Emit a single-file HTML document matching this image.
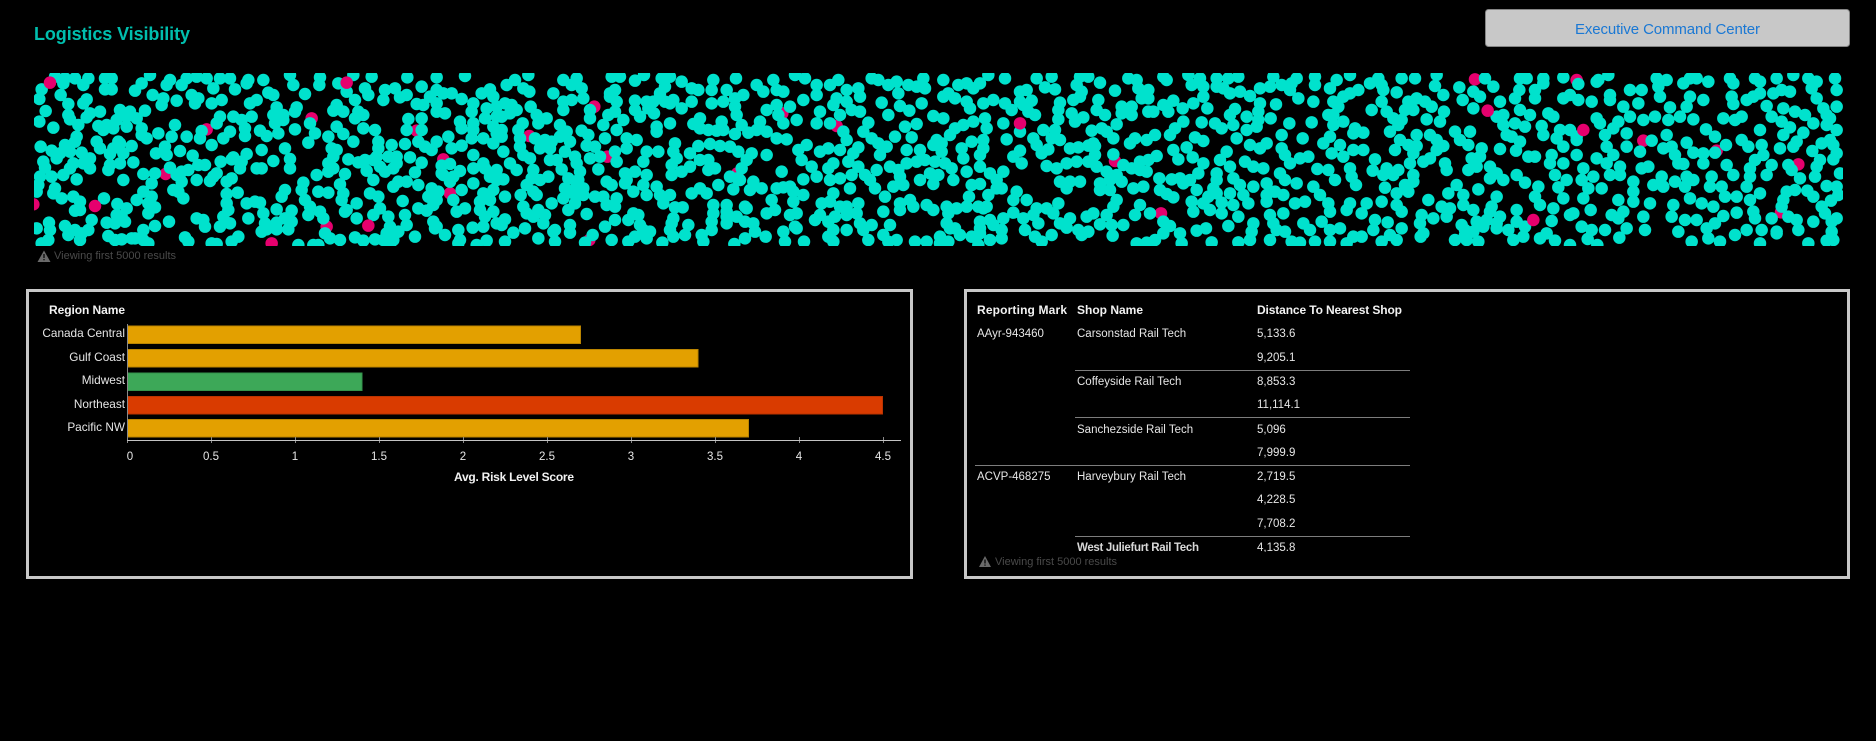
<!DOCTYPE html>
<html><head><meta charset="utf-8"><title>Logistics Visibility</title>
<style>
html,body{margin:0;padding:0;background:#000;width:1876px;height:741px;overflow:hidden}
svg{display:block}
text{font-family:"Liberation Sans",sans-serif;font-size:11.5px;fill:#e6e6e6}
.l{font-size:11.8px}
.b{font-weight:bold;fill:#f2f2f2;font-size:12px}
.w{fill:#4a4a4a;font-size:11px}
.e{text-anchor:end}.m{text-anchor:middle}
.t{fill:none;stroke-linecap:round;stroke-width:37.5}
</style></head><body>
<svg width="1876" height="741" viewBox="0 0 1876 741" xmlns="http://www.w3.org/2000/svg">
<defs><clipPath id="c"><rect x="34" y="73" width="1809" height="173"/></clipPath></defs>
<text x="34" y="40" textLength="156" style="font-size:18px;font-weight:bold;fill:#00bfae">Logistics Visibility</text>
<rect x="1485.5" y="9.5" width="364" height="37" rx="3" fill="#c8c8c8" stroke="#858585"/>
<text x="1575" y="34" textLength="185" style="font-size:15px;fill:#1a78d4">Executive Command Center</text>
<g clip-path="url(#c)">
<g transform="scale(.33333)" class="t" stroke="#e6006e"><path d="M935 355h0M620 388h0M1250 392h0M1330 478h0M497 522h0M1350 580h0M980 680h0"/></g>
<g transform="translate(500 60) scale(.33333)" class="t" stroke="#e6006e"><path d="M283 140h0M847 160h0M1010 198h0M88 228h0M322 290h0M712 340h0M268 540h0"/></g>
<g transform="translate(1000 60) scale(.33333)" class="t" stroke="#e6006e"><path d="M345 303h0M483 460h0M1425 58h0"/></g>
<g transform="translate(1400 0) scale(.33333)" class="t" stroke="#e6006e"><path d="M530 240h0M730 422h0M950 452h0M1195 493h0M1143 637h0"/></g>
<g transform="scale(.33333)" class="t" stroke="#00e2cd"><path d="M165 230h0M195 235h0M225 235h0M265 235h0M315 235h0M335 235h0M450 225h0M510 240h0M560 235h0M590 230h0M620 235h0M660 235h0M690 235h0M745 240h0M790 240h0M870 225h0M960 232h0M1060 225h0M1115 230h0M1222 232h0M1310 232h0M1395 228h0M125 268h0M190 250h0M250 255h0M315 268h0M335 268h0M405 272h0M425 250h0M500 255h0M545 255h0M575 285h0M640 265h0M705 268h0M740 250h0M880 255h0M958 255h0M1015 250h0M1040 275h0M1095 265h0M1155 270h0M1185 265h0M1265 260h0M1310 270h0M1355 280h0M1470 268h0M118 297h0M182 285h0M260 298h0M458 285h0M490 295h0M530 302h0M595 295h0M635 310h0M665 300h0M770 300h0M805 278h0M820 285h0M915 282h0M1065 300h0M1105 285h0M1150 300h0M1200 292h0M1220 285h0M1290 290h0M1330 280h0M1385 297h0M1445 280h0M1480 290h0M137 333h0M205 312h0M250 310h0M485 315h0M585 310h0M750 310h0M830 322h0M890 322h0M1010 315h0M1250 312h0M1270 315h0M1310 310h0M1420 310h0M360 330h0M390 335h0M435 332h0M270 340h0M300 335h0M205 345h0M1000 332h0M1030 335h0M1075 335h0M1310 335h0M1335 340h0M1415 335h0M1460 325h0M1490 320h0M118 365h0M210 358h0M260 352h0M235 375h0M350 360h0M320 375h0M380 350h0M410 355h0M525 375h0M660 350h0M700 350h0M725 360h0M755 350h0M820 345h0M850 345h0M885 335h0M1065 355h0M1090 345h0M1225 357h0M1265 355h0M1380 365h0M1420 370h0M1455 355h0M1490 350h0M160 383h0M295 378h0M380 380h0M425 385h0M650 370h0M690 395h0M735 385h0M780 392h0M825 370h0M850 360h0M885 388h0M930 370h0M1010 380h0M1090 385h0M1125 390h0M1220 390h0M1265 390h0M1385 385h0M1420 390h0M1480 380h0M310 390h0M340 385h0M475 400h0M515 410h0M605 393h0M800 408h0M835 400h0M945 400h0M1030 402h0M1345 410h0M1415 415h0M1450 415h0M1490 400h0M230 410h0M225 425h0M290 425h0M355 425h0M425 405h0M440 415h0M560 410h0M600 415h0M670 415h0M735 408h0M985 410h0M1060 425h0M1135 425h0M1175 435h0M1215 432h0M1255 425h0M1310 425h0M1385 437h0M1480 430h0M122 440h0M195 435h0M155 452h0M300 445h0M340 445h0M395 438h0M360 430h0M495 440h0M540 453h0M635 435h0M785 450h0M855 445h0M925 428h0M995 445h0M1010 450h0M1135 445h0M1275 440h0M1295 450h0M1355 445h0M180 460h0M210 455h0M245 458h0M330 462h0M370 460h0M468 460h0M500 465h0M578 467h0M700 472h0M740 462h0M870 477h0M1000 470h0M1045 478h0M1095 480h0M1130 470h0M1165 470h0M1190 470h0M1230 472h0M1420 465h0M130 485h0M170 475h0M270 475h0M220 490h0M250 490h0M360 490h0M400 487h0M595 495h0M615 495h0M662 485h0M695 478h0M725 485h0M820 483h0M985 490h0M1075 487h0M1120 480h0M1190 490h0M1265 488h0M1325 497h0M1350 492h0M1450 490h0M1420 505h0M135 503h0M210 505h0M270 505h0M325 510h0M330 495h0M510 503h0M565 510h0M720 505h0M770 505h0M785 505h0M870 505h0M1000 505h0M1100 512h0M1140 500h0M1180 505h0M1245 517h0M1380 513h0M1325 520h0M1455 505h0M1490 510h0M120 530h0M155 530h0M190 525h0M430 522h0M465 520h0M530 525h0M545 515h0M650 520h0M640 530h0M695 535h0M950 525h0M985 515h0M1035 522h0M1155 515h0M1330 525h0M1360 530h0M1470 530h0M115 555h0M230 538h0M165 565h0M370 540h0M590 540h0M630 543h0M680 545h0M545 545h0M455 550h0M910 548h0M1020 553h0M1120 540h0M1195 545h0M1220 545h0M1420 550h0M1350 545h0M1490 540h0M110 575h0M160 580h0M220 590h0M185 595h0M520 570h0M535 575h0M430 575h0M680 582h0M713 578h0M855 570h0M845 590h0M905 570h0M955 575h0M985 578h0M1030 580h0M1110 580h0M1135 590h0M1180 560h0M1255 555h0M1295 565h0M1315 575h0M1385 570h0M1450 580h0M1480 570h0M240 605h0M312 595h0M410 600h0M455 590h0M550 595h0M680 610h0M740 610h0M765 605h0M780 608h0M915 600h0M1025 600h0M1208 603h0M1285 590h0M1310 600h0M1360 600h0M1440 605h0M1470 600h0M240 630h0M225 632h0M352 612h0M380 625h0M445 610h0M465 622h0M685 630h0M830 628h0M875 632h0M930 620h0M960 635h0M1040 630h0M1070 610h0M1140 625h0M1255 625h0M1280 632h0M1300 615h0M1395 625h0M1370 635h0M1440 630h0M1480 635h0M365 650h0M350 645h0M445 640h0M590 655h0M610 660h0M670 650h0M745 655h0M790 640h0M855 655h0M925 645h0M970 655h0M1035 635h0M1070 655h0M1120 645h0M1165 650h0M1215 645h0M1455 650h0M147 668h0M275 660h0M195 678h0M320 668h0M345 670h0M375 665h0M465 678h0M507 665h0M615 680h0M660 680h0M690 670h0M795 670h0M830 668h0M875 665h0M1170 680h0M1220 675h0M1300 665h0M1310 680h0M1375 690h0M1418 683h0M1450 680h0M1490 670h0M110 685h0M150 690h0M225 690h0M265 690h0M205 705h0M245 700h0M430 690h0M405 715h0M800 688h0M830 688h0M865 688h0M785 695h0M975 700h0M1065 712h0M1195 695h0M1160 700h0M1245 710h0M1335 705h0M1380 720h0M1305 685h0M145 720h0M125 730h0M240 720h0M325 708h0M345 720h0M365 718h0M395 715h0M430 720h0M445 730h0M555 712h0M565 725h0M635 730h0M650 732h0M715 710h0M695 725h0M895 735h0M940 735h0M955 735h0M990 715h0M1020 720h0M1090 722h0M1125 718h0M1150 720h0M1180 720h0M1170 735h0M1375 730h0M1430 735h0M1460 722h0"/></g>
<g transform="translate(500 60) scale(.33333)" class="t" stroke="#00e2cd"><path d="M835 165h0M712 355h0M20 75h0M45 60h0M85 45h0M190 60h0M230 55h0M335 50h0M360 50h0M405 62h0M432 45h0M485 55h0M510 50h0M545 65h0M640 60h0M708 55h0M770 75h0M820 60h0M885 45h0M915 55h0M1015 60h0M1115 55h0M1135 60h0M1190 65h0M1270 55h0M1330 60h0M1400 70h0M1375 75h0M1465 45h0M70 85h0M88 95h0M160 100h0M215 75h0M245 85h0M330 100h0M345 90h0M495 80h0M480 100h0M575 85h0M595 90h0M635 90h0M680 90h0M730 105h0M790 95h0M830 90h0M850 95h0M950 75h0M990 75h0M1040 90h0M1075 85h0M1165 75h0M1225 75h0M1250 80h0M1275 85h0M1195 100h0M1345 100h0M1420 85h0M1440 70h0M15 130h0M35 135h0M190 125h0M215 120h0M250 115h0M330 110h0M350 125h0M405 122h0M440 125h0M460 125h0M495 125h0M520 120h0M575 125h0M635 130h0M670 125h0M705 115h0M830 135h0M910 120h0M950 105h0M1010 115h0M1080 110h0M1145 128h0M1265 130h0M1330 110h0M1365 115h0M1400 125h0M1480 120h0M50 150h0M92 140h0M190 150h0M270 150h0M345 155h0M405 150h0M445 145h0M462 160h0M510 130h0M545 145h0M705 140h0M800 150h0M870 140h0M1000 135h0M1040 125h0M1080 155h0M1165 165h0M1200 138h0M1228 152h0M1300 168h0M1330 175h0M1410 145h0M1450 130h0M30 160h0M5 170h0M110 165h0M140 175h0M325 165h0M270 175h0M420 170h0M710 165h0M600 175h0M780 185h0M890 180h0M960 155h0M1020 165h0M1055 150h0M68 190h0M115 190h0M180 195h0M310 195h0M370 180h0M510 190h0M470 200h0M580 192h0M665 185h0M725 195h0M850 190h0M950 190h0M990 190h0M1105 188h0M1215 200h0M1250 192h0M1365 205h0M1420 185h0M1455 175h0M1390 195h0M55 210h0M5 210h0M200 215h0M245 212h0M350 210h0M470 215h0M600 205h0M625 210h0M650 212h0M670 210h0M705 222h0M745 218h0M770 210h0M800 215h0M1030 215h0M1090 215h0M1350 225h0M1460 205h0M5 230h0M60 235h0M105 235h0M135 240h0M155 245h0M180 230h0M210 245h0M265 225h0M315 235h0M380 235h0M410 240h0M830 235h0M860 238h0M1040 240h0M1115 235h0M1185 230h0M1235 232h0M1310 240h0M1415 245h0M1450 240h0M60 260h0M120 265h0M150 265h0M260 257h0M285 260h0M380 265h0M525 250h0M595 258h0M630 252h0M660 258h0M690 260h0M920 255h0M985 265h0M1075 262h0M1135 250h0M1160 260h0M1300 255h0M1325 250h0M1385 265h0M1450 265h0M10 275h0M70 285h0M90 295h0M195 275h0M225 290h0M270 295h0M300 290h0M345 275h0M440 275h0M475 275h0M520 275h0M570 280h0M715 275h0M755 280h0M800 285h0M895 270h0M960 275h0M1020 270h0M1060 280h0M1140 285h0M1220 270h0M1260 270h0M1325 275h0M1390 295h0M1440 285h0M170 300h0M150 300h0M230 310h0M30 310h0M350 305h0M430 305h0M530 295h0M600 300h0M625 300h0M740 300h0M905 300h0M1000 310h0M1045 305h0M1075 320h0M1220 310h0M1250 305h0M1275 300h0M1305 305h0M1335 310h0M1440 320h0M50 330h0M100 330h0M185 328h0M295 328h0M240 335h0M515 315h0M570 320h0M645 325h0M725 325h0M845 335h0M935 320h0M985 325h0M1170 320h0M1130 330h0M1195 330h0M1290 340h0M1355 325h0M1400 335h0M95 355h0M145 350h0M205 355h0M235 360h0M375 340h0M380 360h0M405 335h0M440 345h0M515 345h0M545 335h0M625 330h0M690 350h0M720 360h0M910 358h0M950 350h0M990 360h0M1020 355h0M1055 345h0M1095 345h0M1200 350h0M1315 345h0M1360 360h0M1470 340h0M10 358h0M80 375h0M120 360h0M320 365h0M335 375h0M870 380h0M760 365h0M1110 360h0M1490 360h0M100 395h0M195 385h0M230 375h0M250 385h0M375 370h0M430 375h0M470 380h0M600 385h0M655 375h0M700 388h0M750 390h0M785 385h0M830 385h0M850 382h0M1050 385h0M1180 380h0M1210 375h0M1260 360h0M1125 385h0M1300 372h0M1415 375h0M1440 372h0M1490 385h0M15 410h0M62 405h0M110 405h0M190 415h0M220 400h0M250 405h0M285 410h0M310 410h0M350 415h0M400 395h0M440 405h0M480 405h0M510 405h0M575 400h0M620 400h0M880 395h0M910 405h0M1000 400h0M1155 410h0M1407 410h0M1465 405h0M155 430h0M225 430h0M320 435h0M345 440h0M490 430h0M640 435h0M680 435h0M735 440h0M815 420h0M880 425h0M965 430h0M990 425h0M1020 440h0M1075 430h0M1040 440h0M1200 430h0M1230 420h0M1280 435h0M1340 440h0M1370 445h0M1400 440h0M1435 440h0M1460 440h0M70 440h0M115 450h0M205 450h0M525 442h0M548 442h0M640 460h0M680 455h0M740 445h0M800 460h0M825 450h0M1150 455h0M1200 450h0M1240 440h0M1300 450h0M1450 445h0M80 460h0M100 470h0M135 465h0M260 462h0M400 460h0M415 465h0M520 475h0M635 485h0M680 470h0M710 470h0M870 465h0M890 460h0M960 465h0M1040 465h0M1070 460h0M1345 460h0M1440 485h0M1470 480h0M15 478h0M130 490h0M345 480h0M385 480h0M420 495h0M515 490h0M635 510h0M680 490h0M735 485h0M760 490h0M885 500h0M945 480h0M985 485h0M1005 470h0M1080 490h0M1115 495h0M1170 495h0M1340 490h0M1365 505h0M1480 495h0M5 495h0M40 518h0M75 505h0M210 495h0M165 510h0M315 500h0M430 510h0M450 515h0M510 510h0M565 495h0M555 525h0M605 525h0M765 515h0M850 515h0M890 505h0M1000 510h0M1040 510h0M1090 510h0M1150 525h0M1415 530h0M1440 520h0M1380 525h0M1320 530h0M1350 505h0M1440 505h0M15 545h0M115 535h0M160 515h0M165 545h0M210 518h0M278 525h0M255 548h0M335 540h0M385 545h0M405 530h0M440 535h0M487 548h0M520 530h0M610 545h0M703 552h0M735 535h0M797 530h0M855 545h0M912 545h0M985 530h0M1000 545h0M1105 540h0M1165 545h0M1190 540h0M1245 545h0M1280 545h0M1320 550h0M1345 545h0M1435 555h0M1470 540h0"/></g>
<g transform="translate(1000 60) scale(.33333)" class="t" stroke="#00e2cd"><path d="M15 55h0M110 55h0M155 50h0M240 50h0M265 50h0M385 55h0M410 60h0M490 50h0M500 60h0M565 45h0M600 55h0M650 55h0M685 55h0M715 50h0M820 50h0M890 55h0M945 50h0M1010 60h0M1050 45h0M1135 55h0M1205 55h0M1245 55h0M1310 45h0M1455 55h0M300 68h0M230 75h0M575 75h0M610 80h0M650 80h0M670 85h0M845 75h0M875 70h0M945 75h0M1110 70h0M1145 75h0M1305 78h0M1378 82h0M1480 80h0M135 82h0M165 88h0M60 95h0M80 90h0M345 92h0M415 85h0M445 90h0M780 85h0M810 80h0M990 85h0M1050 100h0M1075 90h0M1150 90h0M1190 97h0M245 95h0M240 110h0M220 120h0M395 140h0M425 115h0M445 115h0M610 110h0M690 100h0M720 95h0M750 108h0M870 90h0M895 115h0M1000 125h0M1030 110h0M1145 125h0M1330 105h0M1420 95h0M1440 110h0M1388 120h0M15 130h0M60 125h0M95 122h0M180 128h0M295 120h0M365 140h0M490 135h0M520 122h0M580 130h0M780 130h0M828 133h0M940 125h0M1225 125h0M1250 115h0M1275 125h0M1295 140h0M35 150h0M70 135h0M85 155h0M105 165h0M175 150h0M290 150h0M395 165h0M365 160h0M445 155h0M460 155h0M505 155h0M548 145h0M622 145h0M705 147h0M775 155h0M1115 150h0M1160 155h0M1215 150h0M1240 150h0M1332 155h0M1420 145h0M985 165h0M1015 140h0M215 160h0M225 185h0M250 172h0M315 165h0M175 178h0M10 190h0M550 185h0M605 187h0M690 165h0M645 190h0M740 170h0M775 180h0M812 175h0M868 190h0M935 187h0M1000 165h0M1030 185h0M1180 175h0M1205 180h0M1280 178h0M1320 185h0M1490 170h0M130 210h0M275 212h0M305 205h0M350 193h0M165 210h0M525 205h0M665 205h0M700 195h0M740 210h0M770 200h0M1000 195h0M1065 205h0M1090 218h0M1170 215h0M1195 195h0M1365 215h0M1410 215h0M20 238h0M60 215h0M100 235h0M155 235h0M180 240h0M280 250h0M320 215h0M340 235h0M465 225h0M510 225h0M585 232h0M610 243h0M710 235h0M845 225h0M908 235h0M990 230h0M1060 220h0M1250 225h0M1290 225h0M1310 240h0M1380 240h0M110 255h0M405 235h0M390 250h0M440 240h0M520 270h0M560 262h0M750 255h0M780 265h0M800 250h0M970 250h0M1020 255h0M1200 240h0M1225 255h0M1250 258h0M1330 258h0M1405 255h0M1445 265h0M210 265h0M235 262h0M265 257h0M285 258h0M145 268h0M60 272h0M340 283h0M125 280h0M40 290h0M65 310h0M285 285h0M470 288h0M535 298h0M578 292h0M680 275h0M845 265h0M855 285h0M995 280h0M1030 290h0M1090 270h0M1060 270h0M1185 270h0M1240 280h0M1310 270h0M1125 298h0M1440 290h0M1415 295h0M140 318h0M170 325h0M200 310h0M230 305h0M265 305h0M290 320h0M370 315h0M395 325h0M420 305h0M445 300h0M610 310h0M660 300h0M735 305h0M870 310h0M900 295h0M925 290h0M1230 310h0M1270 305h0M1290 295h0M1335 310h0M1405 330h0M1430 320h0M1470 320h0M10 335h0M320 335h0M350 345h0M420 330h0M440 335h0M595 340h0M690 320h0M760 320h0M790 325h0M650 340h0M952 327h0M985 330h0M1050 325h0M1118 332h0M1160 325h0M1195 330h0M1340 330h0M1180 345h0M1490 340h0M180 365h0M210 365h0M240 365h0M300 370h0M330 360h0M365 365h0M515 358h0M478 355h0M540 355h0M570 360h0M650 360h0M700 355h0M840 340h0M855 360h0M1005 360h0M1055 350h0M1240 345h0M1150 345h0M1470 355h0M5 385h0M200 385h0M300 390h0M330 390h0M400 385h0M430 380h0M480 390h0M590 390h0M550 370h0M640 385h0M720 375h0M760 380h0M800 370h0M890 370h0M940 380h0M1068 375h0M1155 383h0M1215 375h0M1240 365h0M1370 375h0M1435 388h0M50 395h0M80 420h0M40 420h0M350 420h0M500 402h0M520 412h0M575 425h0M625 410h0M650 400h0M690 400h0M730 405h0M800 405h0M825 395h0M850 405h0M960 405h0M1190 400h0M1225 395h0M1285 420h0M1345 400h0M1390 405h0M1490 410h0M40 458h0M110 445h0M140 445h0M175 430h0M340 440h0M420 435h0M610 430h0M665 428h0M700 435h0M745 430h0M800 425h0M885 430h0M915 425h0M985 430h0M1050 430h0M1100 430h0M1145 425h0M1190 435h0M1325 440h0M1390 435h0M1420 450h0M1475 440h0M10 475h0M70 475h0M100 465h0M160 460h0M210 475h0M260 470h0M280 460h0M320 465h0M450 460h0M405 465h0M580 455h0M630 450h0M665 460h0M850 460h0M990 455h0M1040 450h0M1085 460h0M1205 455h0M1265 465h0M1300 475h0M1350 445h0M1340 470h0M1470 455h0M75 510h0M115 490h0M180 490h0M200 503h0M300 493h0M335 495h0M370 495h0M490 485h0M510 498h0M685 498h0M715 470h0M760 490h0M810 465h0M820 490h0M910 490h0M965 485h0M1125 480h0M1163 487h0M1260 490h0M1385 495h0M1430 485h0M1460 480h0M1490 490h0M5 510h0M105 530h0M155 525h0M235 510h0M265 515h0M245 525h0M338 527h0M490 520h0M540 520h0M590 512h0M618 505h0M755 515h0M830 510h0M855 515h0M930 510h0M990 510h0M1020 505h0M1120 510h0M1205 505h0M1170 525h0M1270 520h0M1395 510h0M1420 515h0M1450 500h0M1490 505h0M5 535h0M125 545h0M410 550h0M440 548h0M465 540h0M545 550h0M635 547h0M715 547h0M750 540h0M810 540h0M875 545h0M900 548h0M945 545h0M990 545h0M1040 550h0M1060 530h0M1085 530h0M1145 545h0M1190 540h0M1262 530h0M1365 540h0M1400 540h0M1435 545h0M1395 525h0"/></g>
<g transform="translate(1400 0) scale(.33333)" class="t" stroke="#00e2cd"><path d="M535 252h0M360 235h0M380 235h0M430 235h0M490 232h0M595 240h0M625 225h0M770 235h0M800 240h0M870 235h0M890 235h0M925 245h0M990 235h0M1000 250h0M1065 235h0M1080 245h0M1130 235h0M1180 225h0M1225 235h0M1250 245h0M1305 235h0M358 270h0M405 270h0M430 250h0M405 295h0M490 295h0M510 285h0M535 300h0M575 305h0M590 245h0M630 285h0M630 300h0M690 270h0M725 270h0M775 260h0M780 290h0M850 250h0M870 290h0M910 300h0M995 290h0M1060 290h0M1080 280h0M1040 300h0M1145 270h0M1120 280h0M1170 275h0M1235 265h0M1250 295h0M1310 270h0M300 305h0M345 295h0M670 320h0M715 310h0M810 322h0M860 320h0M1000 312h0M1100 318h0M1270 325h0M1310 320h0M1280 345h0M1150 325h0M310 345h0M360 330h0M390 345h0M445 340h0M460 350h0M690 350h0M730 360h0M765 350h0M805 360h0M840 350h0M880 358h0M970 355h0M1005 360h0M1025 350h0M1115 350h0M1185 335h0M1215 345h0M1145 365h0M1240 370h0M1290 355h0M310 375h0M345 370h0M375 380h0M425 378h0M480 390h0M590 355h0M600 370h0M655 365h0M640 385h0M1080 390h0M1170 382h0M1210 398h0M1310 390h0M1280 375h0M320 405h0M360 425h0M335 410h0M430 405h0M470 415h0M510 390h0M530 410h0M615 405h0M680 400h0M800 405h0M918 388h0M945 410h0M1025 420h0M1150 405h0M1190 425h0M1290 420h0M755 422h0M300 447h0M348 452h0M490 440h0M530 420h0M620 440h0M680 440h0M790 445h0M815 440h0M860 428h0M978 435h0M1045 440h0M1085 435h0M1140 445h0M1180 440h0M1237 453h0M1265 430h0M1300 435h0M385 470h0M405 470h0M455 465h0M530 465h0M590 475h0M640 465h0M720 455h0M825 465h0M880 458h0M910 460h0M945 458h0M1090 465h0M1065 480h0M1260 480h0M1310 460h0M1300 478h0M450 490h0M490 490h0M550 505h0M620 490h0M660 500h0M725 505h0M745 500h0M835 490h0M850 492h0M910 490h0M980 495h0M1050 505h0M1115 495h0M1165 495h0M1250 500h0M1175 510h0M310 540h0M350 525h0M375 548h0M415 560h0M465 525h0M500 540h0M545 540h0M580 530h0M630 525h0M660 525h0M700 545h0M785 530h0M760 555h0M825 545h0M860 530h0M880 540h0M935 530h0M1000 525h0M1050 530h0M1100 525h0M1200 535h0M1245 530h0M1320 520h0M475 562h0M565 565h0M605 565h0M700 575h0M790 560h0M855 560h0M930 560h0M965 560h0M1040 560h0M1160 575h0M1185 570h0M1222 572h0M1280 558h0M1310 560h0M405 590h0M490 595h0M550 595h0M655 600h0M700 605h0M750 610h0M870 595h0M905 610h0M975 590h0M1010 590h0M1050 600h0M1080 580h0M1150 600h0M1240 590h0M1293 602h0M1315 585h0M350 630h0M420 615h0M460 625h0M520 640h0M572 630h0M635 645h0M670 635h0M730 650h0M820 615h0M940 620h0M1010 638h0M1060 635h0M1145 620h0M1265 620h0M1275 640h0M1310 655h0M300 650h0M350 665h0M455 663h0M510 645h0M545 680h0M655 655h0M815 650h0M855 660h0M890 660h0M970 648h0M1065 655h0M1115 655h0M1190 660h0M1240 665h0M1295 665h0M1165 650h0M325 690h0M375 680h0M440 700h0M575 690h0M615 690h0M680 685h0M735 690h0M835 695h0M920 685h0M945 670h0M1040 690h0M1085 690h0M1130 695h0M1195 690h0M1295 695h0M340 720h0M370 710h0M420 715h0M465 722h0M510 735h0M563 717h0M592 735h0M658 713h0M875 725h0M925 715h0M960 725h0M1005 705h0M1080 730h0M1130 700h0M1225 730h0M1280 722h0M1300 720h0"/></g>
<g transform="scale(.33333)" class="t" stroke="#e6006e"><path d="M150 248h0M1040 248h0M100 613h0M285 618h0M1105 677h0M815 730h0"/></g>
<g transform="translate(1000 60) scale(.33333)" class="t" stroke="#e6006e"><path d="M60 190h0M1463 152h0"/></g>
<g transform="translate(1400 0) scale(.33333)" class="t" stroke="#e6006e"><path d="M550 390h0M400 660h0"/></g>
</g>
<path d="M44 250.500l6.500 11.500h-13z" fill="#6a6a6a"/><rect x="43.400" y="254" width="1.200" height="4" fill="#000"/><rect x="43.400" y="259" width="1.200" height="1.300" fill="#000"/>
<text x="54" y="259" class="w" textLength="122">Viewing first 5000 results</text>
<rect x="27.500" y="290.500" width="884" height="287" fill="#000" stroke="#c8c8c8" stroke-width="3"/>
<rect x="965.500" y="290.500" width="883" height="287" fill="#000" stroke="#c8c8c8" stroke-width="3"/>
<g stroke-width="1">
<rect x="127.500" y="326" width="453" height="17.500" fill="#e3a000" stroke="#bb8500"/>
<rect x="127.500" y="349.500" width="570.500" height="17.500" fill="#e3a000" stroke="#bb8500"/>
<rect x="127.500" y="373" width="234.500" height="17.500" fill="#3da858" stroke="#33924b"/>
<rect x="127.500" y="396.500" width="755" height="17.500" fill="#d93b00" stroke="#bb3300"/>
<rect x="127.500" y="419.500" width="621" height="17.500" fill="#e3a000" stroke="#bb8500"/>
</g>
<path d="M127.500 324v119M211.500 437v6M295.500 437v6M379.500 437v6M463.500 437v6M547.500 437v6M631.500 437v6M715.500 437v6M799.500 437v6M883.500 437v6" stroke="#8a8a8a" fill="none"/>
<path d="M127 440.500h774" stroke="#c4c4c4" fill="none"/>
<text x="49" y="314" class="b" textLength="76">Region Name</text>
<text x="125" y="337" class="e l">Canada Central</text>
<text x="125" y="361" class="e l">Gulf Coast</text>
<text x="125" y="384" class="e l">Midwest</text>
<text x="125" y="408" class="e l">Northeast</text>
<text x="125" y="431" class="e l">Pacific NW</text>
<text x="130" y="460" class="m">0</text><text x="211" y="460" class="m">0.5</text><text x="295" y="460" class="m">1</text><text x="379" y="460" class="m">1.5</text><text x="463" y="460" class="m">2</text><text x="547" y="460" class="m">2.5</text><text x="631" y="460" class="m">3</text><text x="715" y="460" class="m">3.5</text><text x="799" y="460" class="m">4</text><text x="883" y="460" class="m">4.5</text>
<text x="454" y="481" class="b" textLength="120">Avg. Risk Level Score</text>
<text x="977" y="314" class="b" textLength="90">Reporting Mark</text><text x="1077" y="314" class="b" textLength="66">Shop Name</text><text x="1257" y="314" class="b" textLength="145">Distance To Nearest Shop</text>
<text x="977" y="337">AAyr-943460</text><text x="1077" y="337">Carsonstad Rail Tech</text><text x="1257" y="337">5,133.6</text>
<text x="1257" y="361">9,205.1</text>
<text x="1077" y="385">Coffeyside Rail Tech</text><text x="1257" y="385">8,853.3</text>
<text x="1257" y="408">11,114.1</text>
<text x="1077" y="433">Sanchezside Rail Tech</text><text x="1257" y="433">5,096</text>
<text x="1257" y="456">7,999.9</text>
<text x="977" y="480">ACVP-468275</text><text x="1077" y="480">Harveybury Rail Tech</text><text x="1257" y="480">2,719.5</text>
<text x="1257" y="503">4,228.5</text>
<text x="1257" y="527">7,708.2</text>
<text x="1077" y="551" style="font-weight:bold;fill:#d8d8d8" textLength="122">West Juliefurt Rail Tech</text><text x="1257" y="551">4,135.8</text>
<path d="M1075 370.500h335M1075 417.500h335M975 465.500h435M1075 536.500h335" stroke="#7d7d7d" fill="none"/>
<rect x="970" y="552" width="450" height="20" fill="#000"/>
<path d="M985 556l6 11h-12z" fill="#6a6a6a"/><rect x="984.400" y="559.500" width="1.200" height="4" fill="#000"/><rect x="984.400" y="564.500" width="1.200" height="1.200" fill="#000"/>
<text x="995" y="565" class="w" textLength="122">Viewing first 5000 results</text>
</svg>
</body></html>
